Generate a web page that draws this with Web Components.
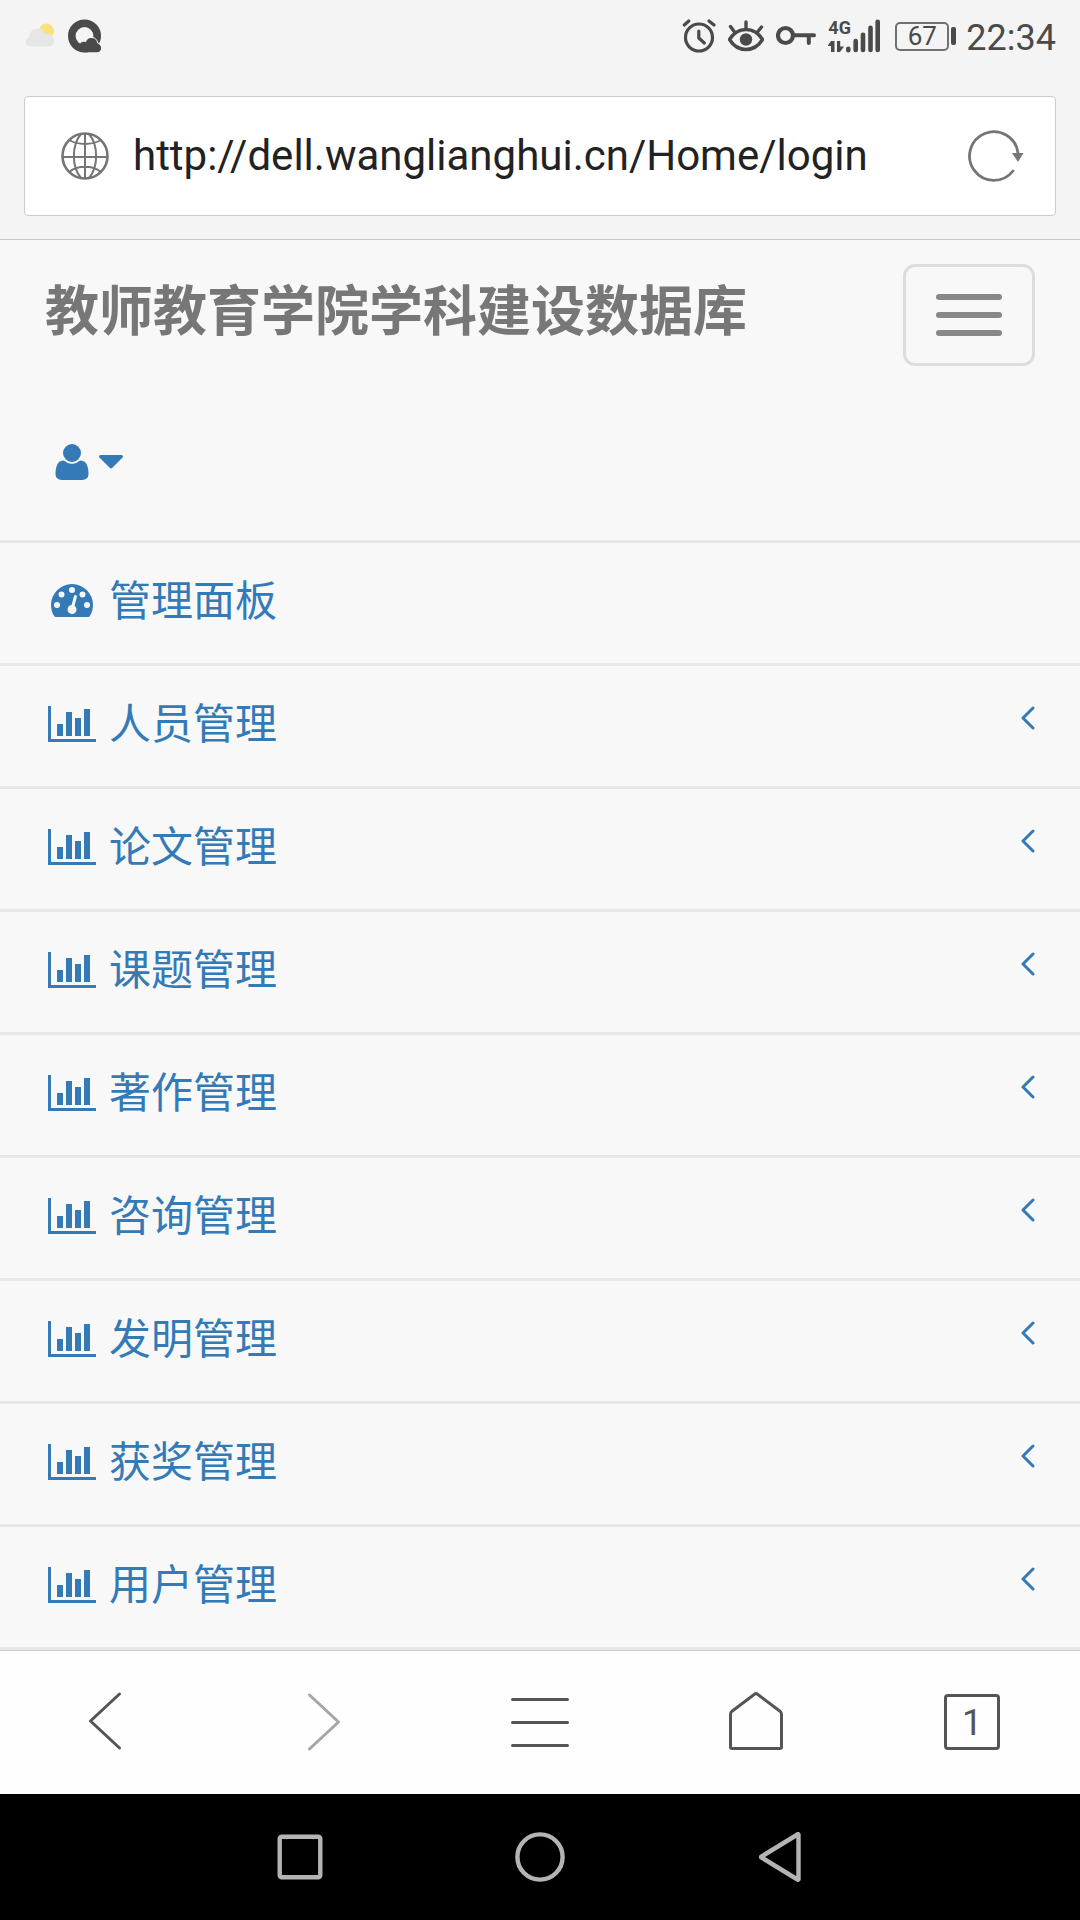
<!DOCTYPE html>
<html lang="zh-CN">
<head>
<meta charset="utf-8">
<meta name="viewport" content="width=device-width, initial-scale=1">
<title>教师教育学院学科建设数据库</title>
<style>
  :root { --ink: #4a4a4a; --link: #337ab7; --line: #e7e7e7; --chrome: #f4f4f4; --gutter: 45px; }
  body {
    margin: 0; min-height: 100vh; display: flex; flex-direction: column;
    background: #f8f8f8; font-family: Roboto, "Noto Sans CJK SC", sans-serif;
  }
  main { flex: 1; }
</style>
</head>
<body>
<status-bar time="22:34" battery="67"></status-bar>
<address-bar url="http://dell.wanglianghui.cn/Home/login"></address-bar>
<main>
  <site-header>教师教育学院学科建设数据库</site-header>
  <side-menu>
    <menu-item icon="dashboard">管理面板</menu-item>
    <menu-item icon="chart" expandable>人员管理</menu-item>
    <menu-item icon="chart" expandable>论文管理</menu-item>
    <menu-item icon="chart" expandable>课题管理</menu-item>
    <menu-item icon="chart" expandable>著作管理</menu-item>
    <menu-item icon="chart" expandable>咨询管理</menu-item>
    <menu-item icon="chart" expandable>发明管理</menu-item>
    <menu-item icon="chart" expandable>获奖管理</menu-item>
    <menu-item icon="chart" expandable>用户管理</menu-item>
  </side-menu>
</main>
<browser-toolbar tabs="1"></browser-toolbar>
<system-nav></system-nav>

<script>
const reset = `
  * { box-sizing: border-box; }
  svg { display: block; flex: none; }
  button { display: flex; align-items: center; justify-content: center; margin: 0; padding: 0; border: 0; background: none; color: inherit; font: inherit; cursor: pointer; }
  a { color: inherit; text-decoration: none; }
`;

function define(name, render) {
  customElements.define(name, class extends HTMLElement {
    connectedCallback() {
      if (this.shadowRoot) return;
      const { css, html } = render(this);
      this.attachShadow({ mode: "open" }).innerHTML = `<style>${reset}${css}</style>${html}`;
    }
  });
}

const icons = {
  dashboard: `<svg width="42" height="33" viewBox="0 256 1792 1408" fill="currentColor" aria-hidden="true"><path fill-rule="evenodd" d="M1792 1152q0 261-141 483-19 29-54 29H195q-35 0-54-29Q0 1414 0 1152q0-182 71-348t191-286 286-191 348-71 348 71 286 191 191 286 71 348zM384 1152a128 128 0 1 0-256 0a128 128 0 1 0 256 0zM576 704a128 128 0 1 0-256 0a128 128 0 1 0 256 0zM1024 512a128 128 0 1 0-256 0a128 128 0 1 0 256 0zM1472 704a128 128 0 1 0-256 0a128 128 0 1 0 256 0zM1664 1152a128 128 0 1 0-256 0a128 128 0 1 0 256 0zM1004 1185l101-382q6-26-7.500-48.500T1059 725t-48 6.500-30 39.500L880 1153q-60 5-107 43.500t-63 98.500q-20 77 20 146t117 89 146-20 89-117q16-60-6-117t-72-91z"/></svg>`,
  chart: `<svg width="48" height="36" viewBox="0 0 2048 1536" fill="currentColor" aria-hidden="true"><path d="M640 768v512H384V768h256zm384-512v1024H768V256h256zm1024 1152v128H0V0h128v1408h1920zM1408 512v768h-256V512h256zm384-384v1152h-256V128h256z"/></svg>`
};

define("status-bar", host => ({
  css: `
    :host { display: flex; align-items: center; justify-content: space-between; height: 72px; padding: 0 24px; background: var(--chrome); color: var(--ink); }
    .group { display: flex; align-items: center; }
    .notices { gap: 12px; }
    .system { gap: 10px; }
    .indicators { gap: 12px; }
    .network { display: flex; align-items: flex-end; }
    .type { display: flex; flex-direction: column; align-items: flex-start; justify-content: space-between; width: 17px; height: 34px; font-size: 18px; line-height: 18px; font-weight: 700; }
    .cell { display: flex; align-items: center; gap: 2px; padding-left: 4px; }
    .charge { display: flex; align-items: center; justify-content: center; width: 54px; height: 29px; border: 2px solid #707070; border-radius: 5px; font-size: 26px; line-height: 26px; }
    .tip { width: 5px; height: 18px; border-radius: 2px; background: var(--ink); }
    time { padding-top: 3px; font-size: 36px; line-height: 42px; }
  `,
  html: `
    <div class="group notices">
      <svg width="32" height="34" viewBox="24 19 32 34" aria-hidden="true"><circle cx="46.500" cy="31" r="7.500" fill="#fbe17c"/><path fill="#e6e6e6" d="M31 46.500c-3 0-5.300-2-5.300-4.600 0-2.300 1.300-4 3.300-4.600 0-5 3.600-8.700 8.500-8.700 3.600 0 6.300 2 7.600 5.300 5-1 9.200 2 9.200 6.300 0 3.600-2.500 6.300-5.800 6.300z"/></svg>
      <svg width="34" height="34" viewBox="69 19.500 34 34" aria-hidden="true"><circle cx="85.500" cy="36.500" r="12.700" fill="none" stroke="#4a4a4a" stroke-width="7.600"/><path d="M80.800 45.500c.4-2.600 3.400-3.900 6-2.700 1-3.100 3.100-4.500 5.700-4.300 3.200.2 5.200 2.500 5.400 5.400 2.500.3 4.200 2.100 4.200 4.500 0 2.700-1.700 4.300-4.300 4.300H85.500z" fill="#4a4a4a"/><path d="M93.500 38c3 .4 4.900 2.600 5.200 5.500 1.600.3 2.600 1 3.300 2" fill="none" stroke="#f4f4f4" stroke-width="1"/></svg>
    </div>
    <div class="group system">
      <div class="group indicators">
        <svg width="34" height="34" viewBox="682.500 19.500 34 34" fill="none" stroke="currentColor" stroke-width="3.200" stroke-linecap="round" stroke-linejoin="round" aria-hidden="true"><circle cx="699.500" cy="38" r="13.500"/><path d="M699.300 31.500v7l5.500 5M684.800 25.500l4.500-4M714.500 25.500l-5-4"/></svg>
        <svg width="36" height="34" viewBox="728 19.500 36 34" fill="none" stroke="currentColor" stroke-width="3.400" stroke-linecap="round" stroke-linejoin="round" aria-hidden="true"><path d="M729.500 40c4-6.500 10-10 16.500-10s12.500 3.500 16.500 10c-4 6.500-10 10-16.500 10s-12.500-3.500-16.500-10zM746 22.500v6M730.500 27l4 5.500M761.500 27.500l-4 5"/><circle cx="746" cy="40" r="6.200" fill="currentColor" stroke="none"/></svg>
        <svg width="40" height="34" viewBox="776 19 40 34" fill="none" stroke="currentColor" stroke-width="4" aria-hidden="true"><circle cx="785.500" cy="35.500" r="7.500" stroke-width="4.200"/><path stroke-linecap="round" d="M795 35.300h19M808.800 36v7"/></svg>
        <div class="network">
          <span class="type">4G<svg width="17" height="12" viewBox="828 41 17 12" fill="currentColor" aria-hidden="true"><path d="M831 41h3.500v11H831v-6h-3.500zM837 41h3.200v5.500H844L840 52h-3z"/></svg></span>
          <svg width="36" height="34" viewBox="845 18.500 36 34" fill="none" stroke="currentColor" stroke-width="4.600" stroke-linecap="round" aria-hidden="true"><path d="M848.300 48.300v1.400M855.700 40.500v9M863 34.300v15.200M870.500 27.300v22.200M877.700 21.300v28.200"/></svg>
        </div>
      </div>
      <div class="cell"><span class="charge">${host.getAttribute("battery")}</span><span class="tip"></span></div>
      <time>${host.getAttribute("time")}</time>
    </div>`
}));

define("address-bar", host => ({
  css: `
    :host { display: block; padding: 24px 24px 23px; background: var(--chrome); border-bottom: 1px solid #c8c8c8; }
    form { display: flex; align-items: center; gap: 24px; height: 120px; padding: 0 31px 0 36px; background: #fff; border: 1px solid #ccc; border-radius: 4px; color: #757575; }
    input { flex: 1; min-width: 0; height: 60px; padding: 0; border: 0; outline: 0; background: none; color: #222; font: 42px/60px Roboto, sans-serif; }
  `,
  html: `
    <form>
      <svg width="48" height="48" viewBox="61 132 48 48" fill="none" stroke="currentColor" stroke-width="2" aria-hidden="true"><circle cx="85" cy="156" r="22.500" stroke-width="2.600"/><path d="M85 133v46M62 157h46M81 134c-9.500 11-9.500 33 0 44M89 134c9.500 11 9.500 33 0 44M69 140c9 5.300 23 5.300 32 0M69 172c9-7 23-7 32 0"/></svg>
      <input type="url" aria-label="网址" value="${host.getAttribute("url")}">
      <button type="button" aria-label="刷新"><svg width="56" height="52" viewBox="968 130 56 52" fill="none" stroke="currentColor" stroke-width="2.800" stroke-linecap="round" aria-hidden="true"><path d="M1013 171a24.300 24.300 0 1 1 5-18"/><path fill="currentColor" stroke="none" d="M1012 153h11.500l-5.500 9z"/></svg></button>
    </form>`
}));

define("site-header", () => ({
  css: `
    :host { display: block; color: #777; }
    header { display: flex; align-items: flex-start; justify-content: space-between; padding: 24px var(--gutter); }
    h1 { margin: 0; padding-top: 12px; font-size: 54px; line-height: 74px; font-weight: 700; }
    .toggle { flex: none; flex-direction: column; gap: 12px; width: 132px; height: 102px; border: 3px solid #ddd; border-radius: 12px; }
    .toggle span { width: 66px; height: 6px; border-radius: 3px; background: #888; }
    nav { display: flex; padding: 54px var(--gutter) 60px; color: var(--link); border-bottom: 3px solid var(--line); }
    .user { display: flex; align-items: center; gap: 10px; padding: 0 10px; }
  `,
  html: `
    <header><h1><slot></slot></h1><button class="toggle" type="button" aria-label="导航"><span></span><span></span><span></span></button></header>
    <nav><a class="user" href="#user" aria-label="用户">
      <svg width="34" height="36" viewBox="0 -1408 1408 1536" fill="currentColor" aria-hidden="true"><path transform="scale(1 -1)" d="M1408 131q0-120-73-189.500t-194-69.500h-874q-121 0-194 69.500t-73 189.500q0 53 3.500 103.500t14 109t26.500 108.500t43 97.500t62 81t85.500 53.500t111.500 20q9 0 42-21.500t74.500-48t108-48t133.500-21.500t133.500 21.500t108 48t74.500 48t42 21.500q61 0 111.500-20t85.500-53.500t62-81t43-97.500t26.500-108.500t14-109t3.500-103.500zM1088 1024q0-159-112.500-271.500t-271.500-112.500t-271.500 112.500t-112.500 271.500t112.500 271.500t271.500 112.500t271.500-112.500t112.500-271.500z"/></svg>
      <svg width="24" height="14" viewBox="0 768 1024 597" fill="currentColor" aria-hidden="true"><path d="M1024 832q0 26-19 45l-448 448q-19 19-45 19t-45-19L19 877Q0 858 0 832t19-45 45-19h896q26 0 45 19t19 45z"/></svg>
    </a></nav>`
}));

define("side-menu", () => ({
  css: `:host { display: block; } nav { display: flex; flex-direction: column; }`,
  html: `<nav><slot></slot></nav>`
}));

define("menu-item", host => ({
  css: `
    :host { display: block; border-bottom: 3px solid var(--line); color: var(--link); }
    a { display: flex; align-items: center; gap: 10px; height: 120px; padding: 0 var(--gutter) 5px; font-size: 42px; line-height: 60px; }
    .icon { display: flex; justify-content: center; width: 54px; }
    .label { flex: 1; padding-top: 3px; }
    .arrow { padding-bottom: 11px; }
  `,
  html: `<a href="#">
    <span class="icon">${icons[host.getAttribute("icon")]}</span>
    <span class="label"><slot></slot></span>
    ${host.hasAttribute("expandable") ? `<span class="arrow"><svg width="15" height="24" viewBox="0 0 15 24" fill="none" stroke="currentColor" stroke-width="3" stroke-linecap="round" stroke-linejoin="round" aria-hidden="true"><path d="M13 2L3 12l10 10"/></svg></span>` : ""}
  </a>`
}));

define("browser-toolbar", host => ({
  css: `
    :host { display: block; background: #fefefe; border-top: 1px solid #ccc; color: #555; }
    nav { display: flex; height: 143px; padding-bottom: 1px; }
    button { flex: 1; }
    button:disabled { color: #a6a6a6; cursor: default; }
    .tabs { display: flex; align-items: center; justify-content: center; width: 56px; height: 56px; padding-top: 2px; border: 3px solid currentColor; border-radius: 4px; font-size: 36px; line-height: 50px; }
  `,
  html: `<nav>
    <button type="button" aria-label="后退"><svg width="60" height="60" viewBox="78 1692 60 60" fill="none" stroke="currentColor" stroke-width="3" stroke-linecap="round" stroke-linejoin="round" aria-hidden="true"><path d="M119.500 1694L90.500 1721l29 27"/></svg></button>
    <button type="button" aria-label="前进" disabled><svg width="60" height="60" viewBox="294 1692 60 60" fill="none" stroke="currentColor" stroke-width="3" stroke-linecap="round" stroke-linejoin="round" aria-hidden="true"><path d="M309.500 1695l29 27-29 27"/></svg></button>
    <button type="button" aria-label="菜单"><svg width="60" height="60" viewBox="510 1692 60 60" fill="none" stroke="currentColor" stroke-width="3" stroke-linecap="round" aria-hidden="true"><path d="M512.500 1699.500h55M512.500 1722.500h55M512.500 1745.500h55"/></svg></button>
    <button type="button" aria-label="主页"><svg width="60" height="60" viewBox="726 1692 60 60" fill="none" stroke="currentColor" stroke-width="3" stroke-linejoin="round" aria-hidden="true"><path d="M730.500 1714.500q0-2 1.500-3.300l22.500-17q1.500-1.200 3 0l22.500 17q1.500 1.300 1.500 3.300v32.500q0 1.500-1.500 1.500h-48q-1.500 0-1.500-1.500z"/></svg></button>
    <button type="button" aria-label="标签页"><span class="tabs">${host.getAttribute("tabs")}</span></button>
  </nav>`
}));

define("system-nav", () => ({
  css: `
    :host { display: block; background: #000; color: #b4b4b4; }
    nav { display: flex; max-width: 720px; height: 126px; margin: 0 auto; }
    button { flex: 1; }
  `,
  html: `<nav>
    <button type="button" aria-label="最近任务"><svg width="50" height="50" viewBox="0 0 50 50" fill="none" stroke="currentColor" stroke-width="4.400" aria-hidden="true"><rect x="4.700" y="4.700" width="40.600" height="40.600" rx="2"/></svg></button>
    <button type="button" aria-label="主屏幕"><svg width="50" height="50" viewBox="0 0 50 50" fill="none" stroke="currentColor" stroke-width="4.400" aria-hidden="true"><circle cx="25" cy="25" r="22.600"/></svg></button>
    <button type="button" aria-label="返回"><svg width="50" height="50" viewBox="755 1832 50 50" fill="none" stroke="currentColor" stroke-width="4.400" stroke-linejoin="round" aria-hidden="true"><path d="M798.500 1834.500v45q-.5.500-1 0l-36-22q-1-.5 0-1l36-22q.5-.5 1 0z"/></svg></button>
  </nav>`
}));
</script>
</body>
</html>
